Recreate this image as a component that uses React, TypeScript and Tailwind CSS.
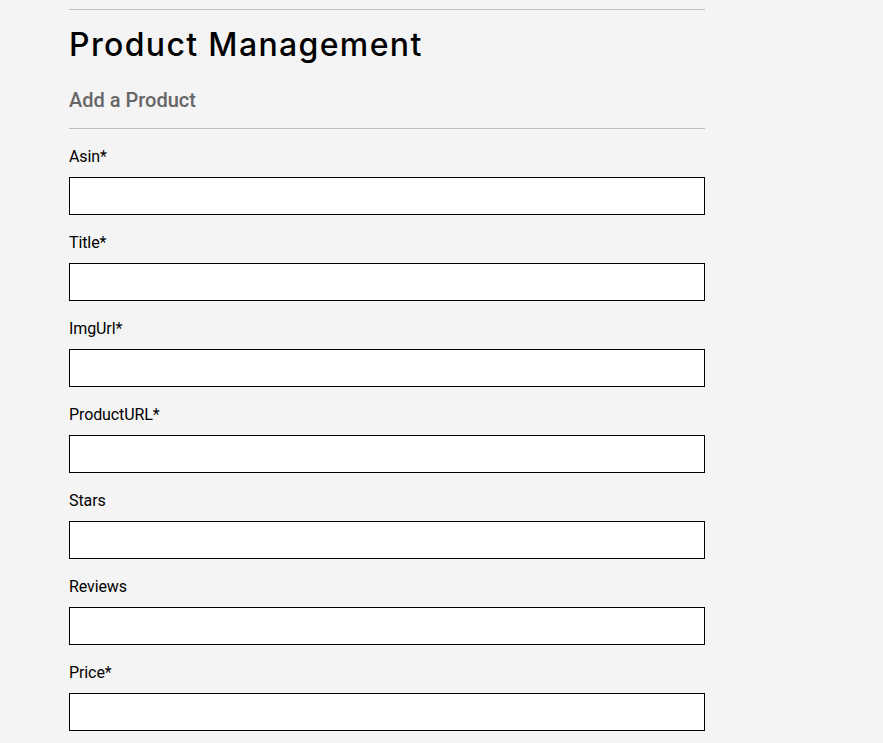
import React from 'react';

const fields = [
  { label: 'Asin*', name: 'asin' },
  { label: 'Title*', name: 'title' },
  { label: 'ImgUrl*', name: 'imgUrl' },
  { label: 'ProductURL*', name: 'productUrl' },
  { label: 'Stars', name: 'stars' },
  { label: 'Reviews', name: 'reviews' },
  { label: 'Price*', name: 'price' },
];

export default function App() {
  return (
    <div className="min-h-screen bg-[#f4f4f4] text-black" style={{ fontFamily: 'Roboto, "Liberation Sans", sans-serif' }}>
      <div className="w-[636px] ml-[69px] pt-[9px]">
        <hr className="border-0 h-px bg-[#bcbcbc]" />
        <h1 className="mt-[11px] text-[32px] leading-[48px] font-medium tracking-[1.35px] font-['Inter',sans-serif]">
          Product Management
        </h1>
        <h2 className="mt-[17px] text-[20px] leading-[28px] font-medium text-[#666]">Add a Product</h2>
        <hr className="mt-[14px] border-0 h-px bg-[#bcbcbc]" />
        <form className="pt-[16px] flex flex-col">
          {fields.map((f) => (
            <div key={f.name} className="flex flex-col mb-[16px]">
              <label htmlFor={f.name} className="text-[16px] leading-[24px] tracking-[-0.1px]">
                {f.label}
              </label>
              <input
                id={f.name}
                type="text"
                className="mt-[8px] h-[38px] w-full bg-white border border-black outline-none px-2"
              />
            </div>
          ))}
        </form>
      </div>
    </div>
  );
}
